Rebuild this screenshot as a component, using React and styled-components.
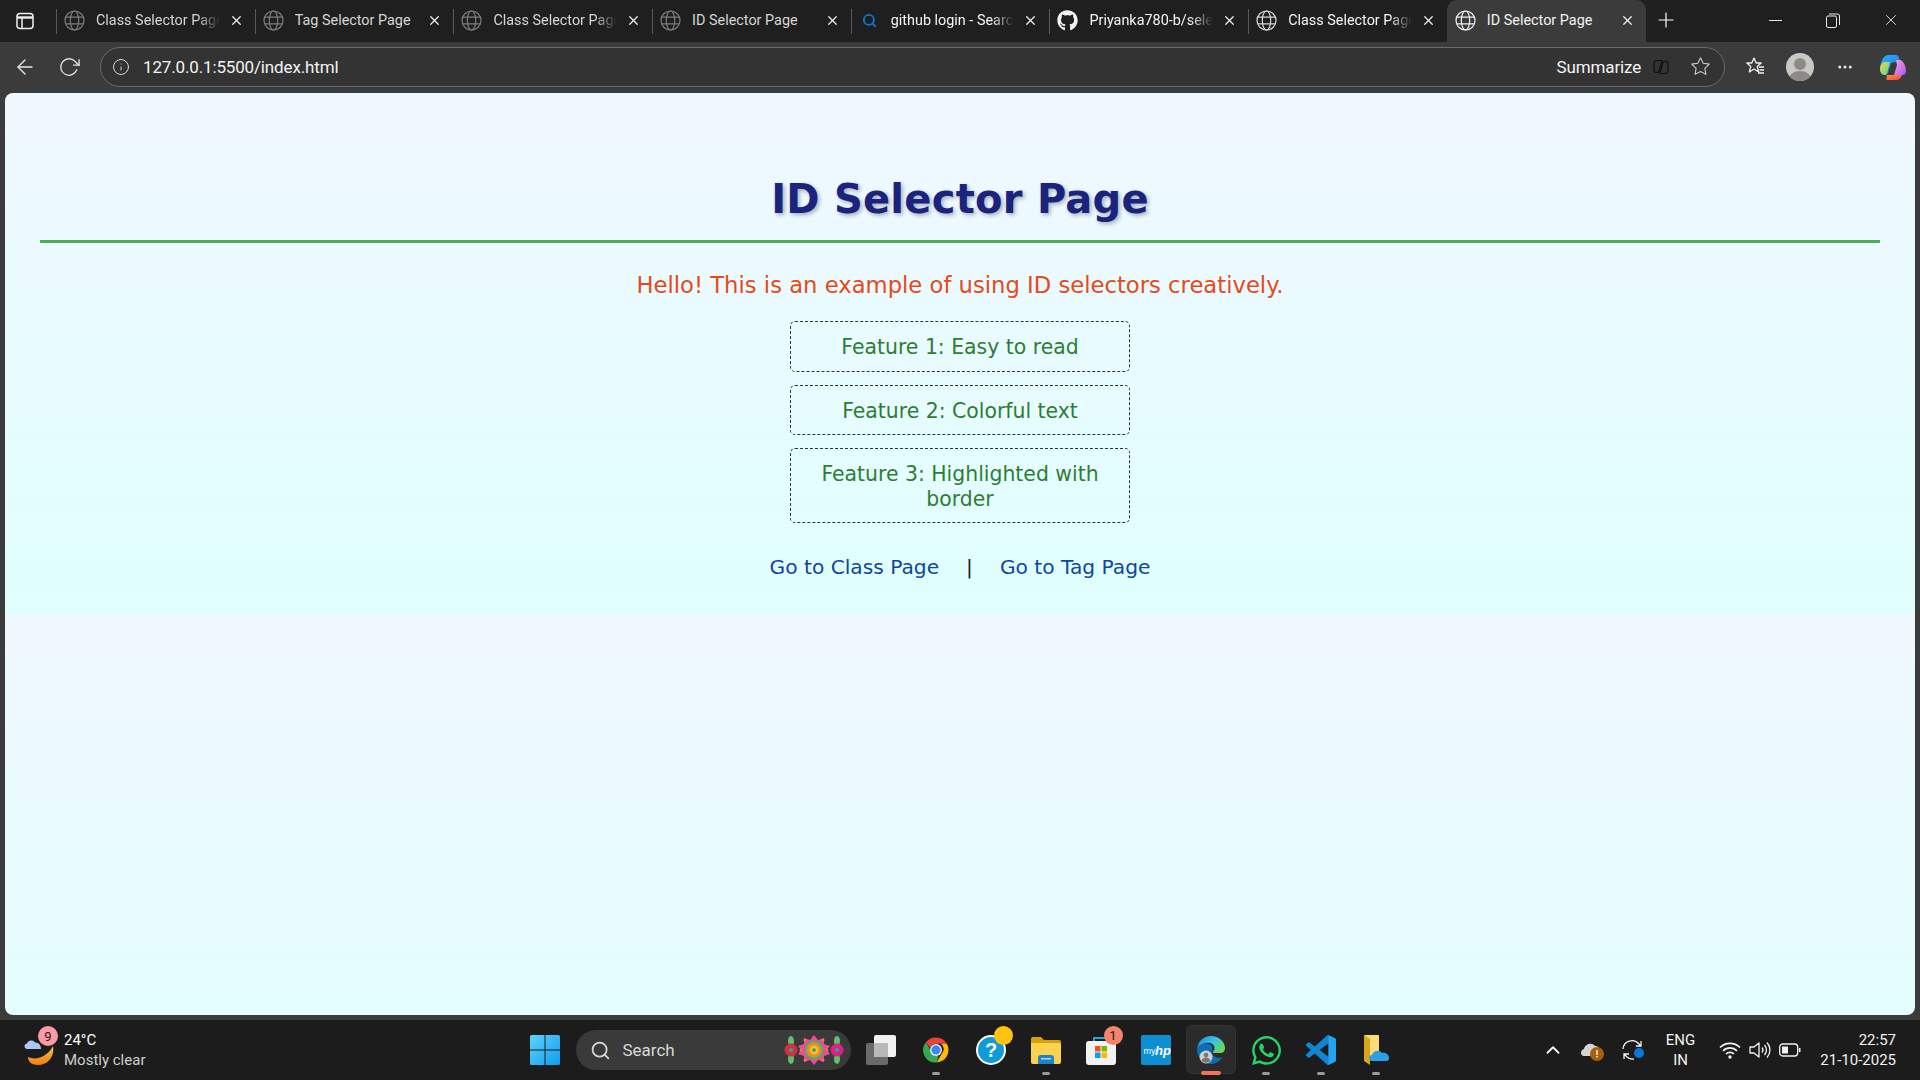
import React from 'react';
import styled, { createGlobalStyle } from 'styled-components';
import { FiX, FiPlus, FiArrowLeft, FiRotateCw, FiInfo, FiStar, FiSearch, FiChevronUp, FiMoreHorizontal } from 'react-icons/fi';
import { FaGithub, FaWhatsapp } from 'react-icons/fa';

const GlobalStyle = createGlobalStyle`
  html, body { margin: 0; padding: 0; height: 100%; overflow: hidden; }
  #root { height: 100%; }
`;

const uiFont = `Roboto, "Liberation Sans", sans-serif`;
const pageFont = `"DejaVu Sans", Verdana, sans-serif`;

const Screen = styled.div`
  height: 1080px;
  display: flex;
  flex-direction: column;
  background: #3b3b3b;
  font-family: ${uiFont};
  color: #fff;
`;

const TabStrip = styled.div`
  height: 42px;
  background: #1f1f1f;
  display: flex;
  align-items: stretch;
  flex: none;
`;

const SidebarBtn = styled.div`
  width: 56px;
  display: flex;
  align-items: center;
  justify-content: center;
  padding-right: 6px;
  box-sizing: border-box;
`;

const Tab = styled.div`
  width: 198.7px;
  flex: none;
  box-sizing: border-box;
  display: flex;
  align-items: center;
  padding: 0 11px 2px 8px;
  position: relative;
  background: ${p => (p.$active ? '#3b3b3b' : 'transparent')};
  border-radius: ${p => (p.$active ? '10px 10px 0 0' : '0')};
`;

const TabSep = styled.span`
  position: absolute;
  left: 0;
  top: 9px;
  bottom: 8px;
  width: 1px;
  background: #5a5a5a;
`;

const TabIcon = styled.span`
  width: 21px;
  height: 21px;
  flex: none;
  display: flex;
  align-items: center;
  justify-content: center;
  color: ${p => p.$color || '#7d7d7d'};
  margin-right: 11px;
`;

const TabTitle = styled.span`
  flex: 1;
  min-width: 0;
  font-size: 14.4px;
  white-space: nowrap;
  overflow: hidden;
  color: ${p => (p.$active ? '#f4f4f4' : '#d6d6d6')};
  ${p => p.$fade && `
    -webkit-mask-image: linear-gradient(90deg, #000 82%, transparent 100%);
    mask-image: linear-gradient(90deg, #000 82%, transparent 100%);
  `}
`;

const TabClose = styled.span`
  flex: none;
  width: 15px;
  margin-left: 9px;
  display: flex;
  color: #efefef;
`;

const NewTab = styled.div`
  width: 40px;
  display: flex;
  align-items: center;
  justify-content: center;
  padding-bottom: 3px;
`;

const WindowBtns = styled.div`
  margin-left: auto;
  display: flex;
  align-items: center;
  padding-bottom: 2px;
`;

const WinBtn = styled.div`
  width: 58px;
  display: flex;
  justify-content: center;
  color: #e8e8e8;
`;

const MinimizeBar = styled.span`
  width: 13px;
  height: 1px;
  background: #e8e8e8;
`;

const Toolbar = styled.div`
  height: 51px;
  flex: none;
  display: flex;
  align-items: center;
  padding: 0 0 2px 13px;
  box-sizing: border-box;
`;

const NavBtn = styled.div`
  width: ${p => p.$w}px;
  display: flex;
  align-items: center;
  color: #e6e6e6;
`;

const AddressBar = styled.div`
  width: 1625px;
  height: 40px;
  flex: none;
  box-sizing: border-box;
  border: 1px solid #6a6a6a;
  border-radius: 20px;
  background: #333;
  display: flex;
  align-items: center;
  padding: 0 13px 0 11px;
`;

const Url = styled.span`
  margin-left: 13px;
  font-size: 17px;
  letter-spacing: -0.15px;
  color: #f4f4f4;
`;

const Summarize = styled.span`
  margin-left: auto;
  font-size: 17px;
  letter-spacing: -0.15px;
  color: #f4f4f4;
`;

const SummarizeSlot = styled.div`
  width: 40px;
  margin-right: 9px;
  display: flex;
  justify-content: center;
`;

const ToolRight = styled.div`
  flex: 1;
  display: flex;
  align-items: center;
  padding-left: 7.5px;
`;

const ToolSlot = styled.div`
  width: ${p => p.$w || 45}px;
  display: flex;
  justify-content: center;
  color: #e6e6e6;
`;

const Avatar = styled.div`
  width: 28px;
  height: 28px;
  border-radius: 50%;
  background: #c9c8c3;
  position: relative;
  overflow: hidden;
  &::before {
    content: '';
    position: absolute;
    left: 8px;
    top: 5px;
    width: 12px;
    height: 12px;
    border-radius: 50%;
    background: #8b8a86;
  }
  &::after {
    content: '';
    position: absolute;
    left: 3px;
    top: 18px;
    width: 22px;
    height: 16px;
    border-radius: 50%;
    background: #8b8a86;
  }
`;

const PageFrame = styled.div`
  flex: 1;
  min-height: 0;
  margin: 0 5px 5px;
  border-radius: 8px;
  overflow: hidden;
  background: linear-gradient(#f0f8ff, #e0ffff);
  background-size: 100% 521px;
  font-family: ${pageFont};
  text-align: center;
`;

const Content = styled.div`
  height: 521px;
  box-sizing: border-box;
  padding: 75px 35px 0;
`;

const Heading = styled.h1`
  margin: 0;
  height: 72px;
  box-sizing: content-box;
  border-bottom: 3px solid #4caf50;
  font-size: 40px;
  line-height: 62px;
  font-weight: 700;
  color: #1a237e;
  text-shadow: 2px 2px 4px rgba(0, 0, 0, 0.3);
  letter-spacing: 0.25px;
`;

const Intro = styled.p`
  margin: 29px 0 0;
  font-size: 22.7px;
  line-height: 27px;
  color: #e64a19;
`;

const Features = styled.div`
  margin: 22px auto 0;
  width: 340px;
  display: flex;
  flex-direction: column;
  gap: 13px;
`;

const Feature = styled.div`
  box-sizing: border-box;
  border: 1px dashed #333;
  border-radius: 5px;
  padding: 13px 20px 11px;
  font-size: 20.4px;
  line-height: 24.5px;
  color: #2e7d32;
`;

const LinkRow = styled.div`
  margin-top: 31px;
  font-size: 20.2px;
  line-height: 26px;
  display: flex;
  justify-content: center;
  color: #222;
`;

const PageLink = styled.a`
  color: #0d47a1;
  text-decoration: none;
`;

const Divider = styled.span`
  margin: 0 27px;
`;

const Taskbar = styled.div`
  height: 60px;
  flex: none;
  background: #1c1c1c;
  display: grid;
  grid-template-columns: 1fr auto 1fr;
  align-items: center;
`;

const Weather = styled.div`
  display: flex;
  align-items: center;
  padding-left: 24px;
  position: relative;
`;

const WeatherBadge = styled.span`
  position: absolute;
  left: 38px;
  top: -4px;
  width: 20px;
  height: 20px;
  border-radius: 50%;
  background: #ff99a4;
  color: #1a1a1a;
  font-size: 13px;
  display: flex;
  align-items: center;
  justify-content: center;
`;

const WeatherText = styled.div`
  margin-left: 10px;
  font-size: 15px;
  line-height: 20px;
  color: #fff;
  & > div + div { color: #cfcfcf; }
`;

const Center = styled.div`
  display: flex;
  align-items: center;
  padding-left: 13px;
`;

const StartBtn = styled.div`
  margin-right: 16px;
  display: flex;
`;

const SearchPill = styled.div`
  width: 275px;
  height: 40px;
  box-sizing: border-box;
  border-radius: 20px;
  background: #3a3a3a;
  display: flex;
  align-items: center;
  padding: 0 7px 0 14px;
  margin-right: 3px;
  color: #d8d8d8;
  font-size: 17px;
`;

const SearchLabel = styled.span`
  margin-left: 12px;
  flex: 1;
`;

const AppIcon = styled.div`
  width: 55px;
  height: 54px;
  position: relative;
  display: flex;
  align-items: center;
  justify-content: center;
  flex: none;
  & > svg { position: relative; }
  ${p => p.$active && `
    &::before {
      content: '';
      position: absolute;
      left: 2.5px;
      right: 2.5px;
      top: 2px;
      bottom: 3px;
      border-radius: 6px;
      background: #2b2b2b;
      border: 1px solid #333;
      box-sizing: border-box;
    }
  `}
`;

const RunDot = styled.span`
  position: absolute;
  left: 50%;
  bottom: 2px;
  transform: translateX(-50%);
  width: ${p => (p.$active ? 20 : 8)}px;
  height: ${p => (p.$active ? 4 : 3)}px;
  border-radius: 2px;
  background: ${p => (p.$active ? '#f0735a' : '#9a9a9a')};
`;

const Badge = styled.span`
  position: absolute;
  top: 3px;
  left: 30px;
  width: 19px;
  height: 19px;
  border-radius: 50%;
  background: ${p => p.$color};
  color: #1a1a1a;
  font-size: 13px;
  display: flex;
  align-items: center;
  justify-content: center;
`;

const Tray = styled.div`
  display: flex;
  align-items: center;
  justify-content: flex-end;
  padding-right: 24px;
  color: #f2f2f2;
`;

const TrayItem = styled.div`
  display: flex;
  align-items: center;
  margin-left: ${p => p.$gap || 0}px;
`;

const TwoLine = styled.div`
  font-size: 15px;
  line-height: 20px;
  text-align: ${p => p.$align || 'center'};
  margin-left: ${p => p.$gap || 0}px;
`;

const Globe = ({ size = 21, width = 1.2 }) => (
  <svg width={size} height={size} viewBox="0 0 21 21" fill="none" stroke="currentColor" strokeWidth={width}>
    <circle cx="10.5" cy="10.5" r="9.5" />
    <ellipse cx="10.5" cy="10.5" rx="4.2" ry="9.5" />
    <path d="M1.6 7.2h17.8M1.6 13.8h17.8" />
  </svg>
);

const SidebarIcon = () => (
  <svg width="18" height="18" viewBox="0 0 18 18" fill="none" stroke="#f0f0f0" strokeWidth="1.5">
    <rect x="1" y="1.5" width="16" height="15" rx="3" />
    <path d="M1 5.5h16" strokeWidth="2.4" />
    <path d="M6 5.5v11" />
  </svg>
);

const RestoreIcon = () => (
  <svg width="14" height="15" viewBox="0 0 14 15" fill="none" stroke="currentColor" strokeWidth="1">
    <rect x="0.5" y="3" width="10" height="11.5" rx="1.5" />
    <path d="M3 1h8.500a2 2 0 0 1 2 2v9" />
  </svg>
);

const SummarizeIcon = () => (
  <svg width="20" height="20" viewBox="0 0 20 20" fill="none" stroke="#111" strokeWidth="1.2">
    <path d="M3 7c0-2 1.500-3.500 3.500-3.500H11L8.500 13c-.4 1.500-1.500 2.500-3 2.500C3.800 15.500 3 14.300 3 13z" />
    <path d="M9 16.500h4.500C15.500 16.500 17 15 17 13V7c0-1.800-1-3-2.500-3-1.500 0-2.600 1-3 2.500z" />
  </svg>
);

const FavoritesIcon = () => (
  <svg width="21" height="21" viewBox="0 0 21 21" fill="none" stroke="#efefef" strokeWidth="1.3" strokeLinejoin="round">
    <path d="M9 2l2.200 5h5l-4 3.400 1.500 5.600L9 13l-4.700 3 1.500-5.600-4-3.400h5z" />
    <path d="M14 11h5M14.500 14h4.500M13 17h6" />
  </svg>
);

const CopilotIcon = () => (
  <svg width="28" height="28" viewBox="0 0 28 28">
    <defs>
      <linearGradient id="cpA" x1="0" y1="0" x2="1" y2="1">
        <stop offset="0" stopColor="#1fb6ff" />
        <stop offset="1" stopColor="#2f6bea" />
      </linearGradient>
      <linearGradient id="cpB" x1="0" y1="0" x2="1" y2="1">
        <stop offset="0" stopColor="#f9a8d4" />
        <stop offset="1" stopColor="#a855f7" />
      </linearGradient>
      <linearGradient id="cpC" x1="0" y1="0" x2="1" y2="1">
        <stop offset="0" stopColor="#fcd34d" />
        <stop offset="1" stopColor="#4ade80" />
      </linearGradient>
      <linearGradient id="cpD" x1="0" y1="0" x2="1" y2="1">
        <stop offset="0" stopColor="#fb923c" />
        <stop offset="1" stopColor="#ef4444" />
      </linearGradient>
    </defs>
    <path d="M9 2h8c1.500 0 2.300.8 2.800 2L21 8l-9 2-3 10c-.5 1.500-1.500 2-3 2-3 0-5-3-5-6 0-5 3-14 8-14z" fill="url(#cpA)" />
    <path d="M1 16c0-3 2-7 5-7h5l-3 11c-.4 1.500-1 2-2.500 2C3 22 1 19 1 16z" fill="url(#cpC)" />
    <path d="M17 7h4c3 0 6 6 6 11 0 3-2 4-4 4h-8l3-10z" fill="url(#cpB)" />
    <path d="M9 27c-1 0-2-.5-1.500-1.500L8 22h15c-1 3-3 5-6 5z" fill="url(#cpD)" />
  </svg>
);

const WindowsLogo = () => (
  <svg width="30" height="30" viewBox="0 0 30 30">
    <defs>
      <linearGradient id="winBlue" x1="0" y1="0" x2="1" y2="1">
        <stop offset="0" stopColor="#5fd4fb" />
        <stop offset="1" stopColor="#0f9bf0" />
      </linearGradient>
    </defs>
    <path d="M0 1.500A1.500 1.500 0 0 1 1.500 0h13v14.500H0zM15.500 0H28.500A1.500 1.500 0 0 1 30 1.500v13H15.500zM0 15.500h14.500V30h-13A1.500 1.500 0 0 1 0 28.500zM15.500 15.500H30v13a1.500 1.500 0 0 1-1.500 1.500h-13z" fill="url(#winBlue)" />
  </svg>
);

const WeatherIcon = () => (
  <svg width="30" height="32" viewBox="0 0 30 32">
    <defs>
      <linearGradient id="moon" x1="0" y1="0" x2="0" y2="1">
        <stop offset="0" stopColor="#f8c24a" />
        <stop offset="1" stopColor="#ee7f12" />
      </linearGradient>
    </defs>
    <path d="M29 12c2 10-5 19-15 19-6 0-10-3-10-8 9 4 20-1 25-11z" fill="url(#moon)" />
    <path d="M3 15c-3 0-3.500-5 0-5.500 1-3.500 6-4 8-1 3 0 6 2 6 6.500z" fill="#a9c8f5" />
  </svg>
);

const Mandala = () => (
  <svg width="60" height="30" viewBox="0 0 60 30">
    <ellipse cx="7" cy="6" rx="3" ry="5" fill="#5fbf6a" />
    <ellipse cx="7" cy="24" rx="3" ry="5" fill="#5fbf6a" />
    <circle cx="7" cy="15" r="6.500" fill="#d0303f" />
    <circle cx="7" cy="15" r="2" fill="#25a89f" />
    <ellipse cx="53" cy="6" rx="3" ry="5" fill="#5fbf6a" />
    <ellipse cx="53" cy="24" rx="3" ry="5" fill="#5fbf6a" />
    <circle cx="53" cy="15" r="6.500" fill="#e01f86" />
    <circle cx="53" cy="15" r="2" fill="#25a89f" />
    <path d="M30 0l4 5 6-2 0 6 6 2-3 4 3 4-6 2 0 6-6-2-4 5-4-5-6 2 0-6-6-2 3-4-3-4 6-2 0-6 6 2z" fill="#ec4aa0" />
    <circle cx="30" cy="15" r="9.500" fill="#3fb56a" />
    <circle cx="30" cy="15" r="7.500" fill="#f28a1e" />
    <circle cx="30" cy="15" r="4.500" fill="#f6c02c" />
    <circle cx="30" cy="15" r="1.800" fill="#1f9d94" />
    <g fill="#f0801c">
      <circle cx="21" cy="5" r="1.500" />
      <circle cx="39" cy="5" r="1.500" />
      <circle cx="21" cy="25" r="1.500" />
      <circle cx="39" cy="25" r="1.500" />
      <circle cx="17" cy="15" r="1.500" />
      <circle cx="43" cy="15" r="1.500" />
    </g>
  </svg>
);

const TaskViewIcon = () => (
  <svg width="30" height="30" viewBox="0 0 30 30">
    <rect x="8" y="0" width="22" height="22" rx="2" fill="#f1f1f1" />
    <rect x="0" y="8" width="22" height="22" rx="2" fill="#6a6a6a" />
    <rect x="8" y="8" width="14" height="14" fill="#b8b8b8" />
  </svg>
);

const ChromeIcon = () => (
  <svg width="30" height="30" viewBox="0 0 48 48">
    <path d="M24 4a20 20 0 0 1 17.300 10H24a10 10 0 0 0-9.400 6.600L7.800 11.500A20 20 0 0 1 24 4z" fill="#ea4335" />
    <path d="M41.300 14A20 20 0 0 1 25 44l8.600-15A10 10 0 0 0 32 14z" fill="#fbbc04" />
    <path d="M7.800 11.500l8.600 15A10 10 0 0 0 28 33.500L25 44A20 20 0 0 1 7.800 11.500z" fill="#34a853" />
    <circle cx="24" cy="24" r="9.500" fill="#fff" />
    <circle cx="24" cy="24" r="7.500" fill="#4285f4" />
  </svg>
);

const HelpIcon = () => (
  <svg width="30" height="30" viewBox="0 0 30 30">
    <circle cx="15" cy="15" r="14" fill="#0f9bd7" stroke="#fff" strokeWidth="2" />
    <text x="15" y="22" textAnchor="middle" fontFamily="Liberation Sans, sans-serif" fontWeight="700" fontSize="20" fill="#fff">?</text>
  </svg>
);

const FolderIcon = () => (
  <svg width="30" height="28" viewBox="0 0 30 28">
    <path d="M0 3a2 2 0 0 1 2-2h8l3 3h15a2 2 0 0 1 2 2v3H0z" fill="#d9a008" />
    <path d="M0 7h28a2 2 0 0 1 2 2v17a2 2 0 0 1-2 2H2a2 2 0 0 1-2-2z" fill="#fbd350" />
    <path d="M7 28v-6a3 3 0 0 1 3-3h10a3 3 0 0 1 3 3v6z" fill="#1d83cd" />
    <rect x="10" y="22" width="10" height="1.500" fill="#a9dcf7" />
  </svg>
);

const StoreIcon = () => (
  <svg width="30" height="30" viewBox="0 0 30 30">
    <path d="M8 7V3h14v4" fill="none" stroke="#2aa3e0" strokeWidth="2" />
    <rect x="0" y="6" width="30" height="24" rx="3" fill="#f2f2f2" />
    <rect x="9" y="11" width="5.500" height="5.500" fill="#f25022" />
    <rect x="15.500" y="11" width="5.500" height="5.500" fill="#7fba00" />
    <rect x="9" y="17.500" width="5.500" height="5.500" fill="#00a4ef" />
    <rect x="15.500" y="17.500" width="5.500" height="5.500" fill="#ffb900" />
  </svg>
);

const MyHpIcon = () => (
  <svg width="30" height="30" viewBox="0 0 30 30">
    <rect width="30" height="30" rx="2" fill="#0b8fd0" />
    <text x="2.500" y="19" fontFamily="Liberation Sans, sans-serif" fontSize="9" fill="#fff">my</text>
    <text x="14" y="20" fontFamily="Liberation Sans, sans-serif" fontStyle="italic" fontWeight="700" fontSize="13" fill="#fff">hp</text>
  </svg>
);

const EdgeIcon = () => (
  <svg width="30" height="30" viewBox="0 0 30 30">
    <defs>
      <linearGradient id="edgeG" x1="0" y1="0.2" x2="1" y2="0.6">
        <stop offset="0" stopColor="#1f8fd8" />
        <stop offset="0.55" stopColor="#36c3e8" />
        <stop offset="1" stopColor="#6bd94f" />
      </linearGradient>
    </defs>
    <path d="M1 14C2 6 8 1 15 1c8 0 14 6 14 12 0 3-2 5-5 5h-6c-1 0-1.500-.6-1-1.500 1-1 1.500-2 1.500-3.500C18.500 9 14 7 10 8 5 9 2 11 1 14z" fill="url(#edgeG)" />
    <path d="M1 14c1-3 4-5 8.500-5.500C13 8 16 10 16.500 13c-2 4 0 8 4 9.500 2 .6 4 .5 6-.5-2.500 4-7 7-11.500 7C7 29 1 22 1 14z" fill="#0f6fb5" />
    <circle cx="10" cy="22" r="6.500" fill="#cfcfcf" />
    <circle cx="10" cy="20" r="2.300" fill="#777" />
    <path d="M5.500 26c.8-2.500 2.500-3.500 4.500-3.500s3.700 1 4.500 3.500a6.500 6.500 0 0 1-9 0z" fill="#777" />
  </svg>
);

const VsCodeIcon = () => (
  <svg width="30" height="30" viewBox="0 0 24 24">
    <path d="M23.150 2.587L18.210.21a1.494 1.494 0 0 0-1.705.29l-9.460 8.630-4.120-3.128a.999.999 0 0 0-1.276.057L.327 7.261A1 1 0 0 0 .326 8.740L3.899 12 .326 15.260a1 1 0 0 0 .001 1.479L1.650 17.940a.999.999 0 0 0 1.276.057l4.120-3.128 9.460 8.630a1.492 1.492 0 0 0 1.704.29l4.942-2.377A1.500 1.500 0 0 0 24 20.060V3.939a1.500 1.500 0 0 0-.85-1.352zm-5.146 14.861L10.826 12l7.178-5.448v10.896z" fill="#0f86d4" />
    <path d="M18 .1l5.150 2.487A1.500 1.500 0 0 1 24 3.939v16.120a1.500 1.500 0 0 1-.85 1.354L18 23.900z" fill="#25a3ee" />
  </svg>
);

const FilesIcon = () => (
  <svg width="26" height="30" viewBox="0 0 26 30">
    <rect x="1" y="0" width="15" height="24" rx="1" fill="#fbdc78" />
    <path d="M1 0l6 4v26l-6-4z" fill="#d9a51e" />
    <path d="M9 26c-4 0-4-6 0-6 1-4 7-6 10-2 4-1 7 2 7 5s-2 3-4 3z" fill="#2c9fe6" />
  </svg>
);

const OneDriveIcon = () => (
  <svg width="26" height="24" viewBox="0 0 26 24">
    <path d="M4 18c-4 0-4-6 0-7 1-5 8-7 11-3 3 0 5 2 5 5v5z" fill="#d4d4d4" />
    <circle cx="17" cy="16" r="7" fill="#a85f0b" />
    <rect x="16.300" y="12" width="1.400" height="5" fill="#fff" />
    <rect x="16.300" y="18" width="1.400" height="1.500" fill="#fff" />
  </svg>
);

const SyncIcon = () => (
  <svg width="26" height="24" viewBox="0 0 26 24" fill="none" stroke="#f2f2f2" strokeWidth="1.300">
    <path d="M1 11a9 9 0 0 1 16-5l2 2M19 3v5h-5" />
    <path d="M2 16l3 3a9 9 0 0 0 7 2M2 21v-5h5" />
    <circle cx="17" cy="15" r="5" fill="#0a78e0" stroke="none" />
  </svg>
);

const WifiIcon = () => (
  <svg width="22" height="18" viewBox="0 0 22 18" fill="none" stroke="#f2f2f2" strokeWidth="1.700">
    <path d="M1 6.500a14 14 0 0 1 20 0" />
    <path d="M4 9.800a10 10 0 0 1 14 0" />
    <path d="M7 13a5.600 5.600 0 0 1 8 0" />
    <circle cx="11" cy="16" r="1.700" fill="#f2f2f2" stroke="none" />
  </svg>
);

const VolumeIcon = () => (
  <svg width="22" height="20" viewBox="0 0 22 20" fill="none" stroke="#f2f2f2" strokeWidth="1.300" strokeLinejoin="round">
    <path d="M1 7v6h4l5 4V3L5 7z" />
    <path d="M13 7.500a4 4 0 0 1 0 5M15.500 5a7.500 7.500 0 0 1 0 10M18 2.500a11 11 0 0 1 0 15" />
  </svg>
);

const BatteryIcon = () => (
  <svg width="22" height="14" viewBox="0 0 22 14" fill="none" stroke="#f2f2f2" strokeWidth="1.300">
    <rect x="0.700" y="1" width="18" height="12" rx="3" />
    <rect x="3" y="3.500" width="6" height="7" fill="#f2f2f2" stroke="none" />
    <path d="M20.700 5v4" strokeWidth="1.600" />
  </svg>
);

const tabs = [
  { title: 'Class Selector Page', fade: true },
  { title: 'Tag Selector Page' },
  { title: 'Class Selector Page', fade: true },
  { title: 'ID Selector Page' },
  { title: 'github login - Search', fade: true, icon: <FiSearch size={15} strokeWidth={3} />, color: '#1177cc' },
  { title: 'Priyanka780-b/selectors', fade: true, icon: <FaGithub size={21} />, color: '#f2f2f2' },
  { title: 'Class Selector Page', fade: true, color: '#d8d8d8' },
  { title: 'ID Selector Page', active: true, color: '#f0f0f0' },
];

const apps = [
  { icon: <TaskViewIcon /> },
  { icon: <ChromeIcon />, running: true },
  { icon: <HelpIcon />, badge: '', badgeColor: '#ffc20e' },
  { icon: <FolderIcon />, running: true },
  { icon: <StoreIcon />, badge: '1', badgeColor: '#f4846c' },
  { icon: <MyHpIcon /> },
  { icon: <EdgeIcon />, active: true },
  { icon: <FaWhatsapp size={33} color="#25d366" />, running: true },
  { icon: <VsCodeIcon />, running: true },
  { icon: <FilesIcon />, running: true },
];

export default function App() {
  return (
    <Screen>
      <GlobalStyle />
      <TabStrip>
        <SidebarBtn><SidebarIcon /></SidebarBtn>
        {tabs.map((t, i) => (
          <Tab key={i} $active={t.active}>
            {!t.active && <TabSep />}
            <TabIcon $color={t.color}>{t.icon || <Globe />}</TabIcon>
            <TabTitle $active={t.active || t.color} $fade={t.fade}>{t.title}</TabTitle>
            <TabClose><FiX size={15} /></TabClose>
          </Tab>
        ))}
        <NewTab><FiPlus size={24} strokeWidth={1.2} /></NewTab>
        <WindowBtns>
          <WinBtn><MinimizeBar /></WinBtn>
          <WinBtn><RestoreIcon /></WinBtn>
          <WinBtn><FiX size={18} strokeWidth={1.2} /></WinBtn>
        </WindowBtns>
      </TabStrip>

      <Toolbar>
        <NavBtn $w={45}><FiArrowLeft size={24} strokeWidth={1.4} /></NavBtn>
        <NavBtn $w={42}><FiRotateCw size={22} strokeWidth={1.4} /></NavBtn>
        <AddressBar>
          <FiInfo size={18} strokeWidth={1.3} color="#d8d8d8" />
          <Url>127.0.0.1:5500/index.html</Url>
          <Summarize>Summarize</Summarize>
          <SummarizeSlot><SummarizeIcon /></SummarizeSlot>
          <FiStar size={21} strokeWidth={1.2} color="#cfcfcf" />
        </AddressBar>
        <ToolRight>
          <ToolSlot><FavoritesIcon /></ToolSlot>
          <ToolSlot><Avatar /></ToolSlot>
          <ToolSlot><FiMoreHorizontal size={18} /></ToolSlot>
          <ToolSlot $w={51}><CopilotIcon /></ToolSlot>
        </ToolRight>
      </Toolbar>

      <PageFrame>
        <Content>
          <Heading>ID Selector Page</Heading>
          <Intro>Hello! This is an example of using ID selectors creatively.</Intro>
          <Features>
            <Feature>Feature 1: Easy to read</Feature>
            <Feature>Feature 2: Colorful text</Feature>
            <Feature>Feature 3: Highlighted with border</Feature>
          </Features>
          <LinkRow>
            <PageLink href="#">Go to Class Page</PageLink>
            <Divider>|</Divider>
            <PageLink href="#">Go to Tag Page</PageLink>
          </LinkRow>
        </Content>
      </PageFrame>

      <Taskbar>
        <Weather>
          <WeatherIcon />
          <WeatherBadge>9</WeatherBadge>
          <WeatherText>
            <div>24°C</div>
            <div>Mostly clear</div>
          </WeatherText>
        </Weather>
        <Center>
          <StartBtn><WindowsLogo /></StartBtn>
          <SearchPill>
            <FiSearch size={21} />
            <SearchLabel>Search</SearchLabel>
            <Mandala />
          </SearchPill>
          {apps.map((a, i) => (
            <AppIcon key={i} $active={a.active}>
              {a.icon}
              {a.badge !== undefined && <Badge $color={a.badgeColor}>{a.badge}</Badge>}
              {(a.running || a.active) && <RunDot $active={a.active} />}
            </AppIcon>
          ))}
        </Center>
        <Tray>
          <TrayItem><FiChevronUp size={22} /></TrayItem>
          <TrayItem $gap={16}><OneDriveIcon /></TrayItem>
          <TrayItem $gap={16}><SyncIcon /></TrayItem>
          <TwoLine $gap={18}><div>ENG</div><div>IN</div></TwoLine>
          <TrayItem $gap={24}><WifiIcon /></TrayItem>
          <TrayItem $gap={8}><VolumeIcon /></TrayItem>
          <TrayItem $gap={8}><BatteryIcon /></TrayItem>
          <TwoLine $gap={19} $align="right"><div>22:57</div><div>21-10-2025</div></TwoLine>
        </Tray>
      </Taskbar>
    </Screen>
  );
}
